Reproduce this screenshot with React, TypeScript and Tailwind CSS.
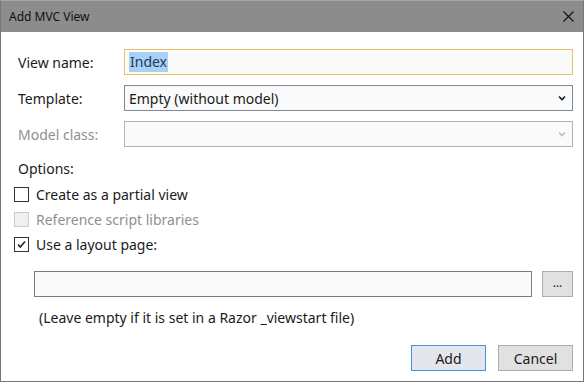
import React from "react";

const Chevron = ({ color }: { color: string }) => (
  <svg width="8" height="6" viewBox="0 0 8 6" className="shrink-0">
    <path d="M1 1.5 L4 4.5 L7 1.5" fill="none" stroke={color} strokeWidth="1.6" />
  </svg>
);

function Checkbox({ checked, disabled }: { checked?: boolean; disabled?: boolean }) {
  return (
    <div
      className={`w-[15px] h-[15px] border flex items-center justify-center shrink-0 ${
        disabled ? "border-[#cccccc] bg-[#f0f0f0]" : "border-[#333333] bg-white"
      }`}
    >
      {checked && (
        <svg width="11" height="11" viewBox="0 0 11 11">
          <path d="M2 5.5 L4.3 8 L9 2.5" fill="none" stroke="#222" strokeWidth="1.6" />
        </svg>
      )}
    </div>
  );
}

export default function App() {
  return (
    <div
      className="w-[584px] h-[382px] bg-white border border-[#777777] border-t-[#a6a6a6] flex flex-col text-[14px] text-[#1b1b1b] overflow-hidden"
      style={{ fontFamily: '"Noto Sans", "Open Sans", sans-serif' }}
    >
      {/* title bar */}
      <div className="h-[31px] bg-[#8c8c8c] flex items-center justify-between pl-[8px] pr-[8px] shrink-0">
        <span className="text-[12px] text-[#111]">Add MVC View</span>
        <svg width="11" height="11" viewBox="0 0 11 11" className="mr-[1px]">
          <path d="M0.5 0.5 L10.5 10.5 M10.5 0.5 L0.5 10.5" stroke="#111" strokeWidth="1.1" />
        </svg>
      </div>

      <div className="flex flex-col pt-[17px] pl-[12px] pr-[10px]">
        {/* view name */}
        <div className="flex items-center h-[26px]">
          <span className="w-[111px] pl-[5px]">View name:</span>
          <div className="flex-1 h-[26px] border border-[#e5c365] bg-[#fafafa] flex items-center pl-[4px]">
            <span className="bg-[#a9d1f5] text-[#1e3a5c] px-[1px] leading-[20px]">Index</span>
          </div>
        </div>

        {/* template */}
        <div className="flex items-center h-[26px] mt-[10px]">
          <span className="w-[111px] pl-[5px]">Template:</span>
          <div className="flex-1 h-[26px] border border-[#7a8a9a] bg-[#fafafa] flex items-center justify-between pl-[4px] pr-[6px]">
            <span>Empty (without model)</span>
            <Chevron color="#1b1b1b" />
          </div>
        </div>

        {/* model class */}
        <div className="flex items-center h-[26px] mt-[10px]">
          <span className="w-[111px] pl-[5px] text-[#8f8f8f]">Model class:</span>
          <div className="flex-1 h-[26px] border border-[#a9b4c0] bg-[#fafafa] flex items-center justify-end pr-[6px]">
            <Chevron color="#b8bec6" />
          </div>
        </div>

        <div className="pl-[5px] mt-[10px] h-[22px] flex items-center">Options:</div>

        <div className="flex flex-col gap-[10px] mt-[8px] pl-[1px]">
          <div className="flex items-center gap-[7px] h-[15px]">
            <Checkbox />
            <span>Create as a partial view</span>
          </div>
          <div className="flex items-center gap-[7px] h-[15px]">
            <Checkbox disabled />
            <span className="text-[#8f8f8f]">Reference script libraries</span>
          </div>
          <div className="flex items-center gap-[7px] h-[15px]">
            <Checkbox checked />
            <span>Use a layout page:</span>
          </div>
        </div>

        <div className="flex items-center mt-[19px] pl-[21px] gap-[10px]">
          <div className="flex-1 h-[26px] border border-[#7a7a8a] bg-[#fafafa]" />
          <div className="w-[31px] h-[26px] border border-[#adadad] bg-[#e1e1e1] flex items-center justify-center text-[12px] leading-none pb-[3px]">
            ...
          </div>
        </div>

        <div className="pl-[26px] mt-[7px] h-[26px] flex items-center">
          (Leave empty if it is set in a Razor _viewstart file)
        </div>

        <div className="flex justify-end gap-[12px] mt-[15px]">
          <div className="w-[75px] h-[26px] border border-[#3d95e8] bg-[#e5e5ec] flex items-center justify-center">
            Add
          </div>
          <div className="w-[75px] h-[26px] border border-[#adadad] bg-[#e1e1e1] flex items-center justify-center">
            Cancel
          </div>
        </div>
      </div>
    </div>
  );
}
